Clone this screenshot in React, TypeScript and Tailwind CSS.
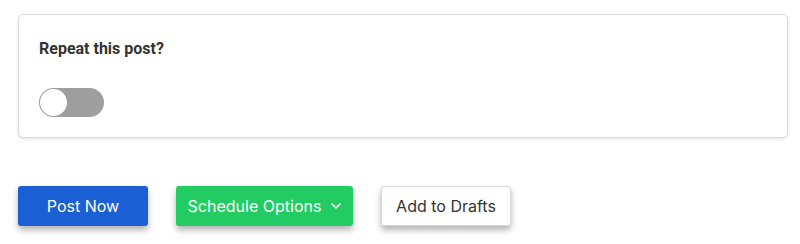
import React from "react";

export default function App() {
  return (
    <div className="w-[800px] h-[244px] bg-white px-[18px] pt-[14px]" style={{ fontFamily: "Inter, 'Noto Sans', sans-serif" }}>
      <div className="w-[770px] h-[124px] rounded-[5px] border border-[#dcdcdc] bg-white shadow-[0_1px_3px_rgba(0,0,0,0.12)] px-[20px] pt-[24px]">
        <div className="text-[16px] font-bold text-[#333] leading-[20px]" style={{ fontFamily: "Roboto, 'Noto Sans', sans-serif" }}>
          Repeat this post?
        </div>
        <div className="mt-[29px] relative w-[65px] h-[29px] rounded-full bg-[#9e9e9e]">
          <div className="absolute left-[1px] top-[1px] w-[27px] h-[27px] rounded-full bg-white" />
        </div>
      </div>
      <div className="mt-[48px] flex items-center gap-[28px]">
        <button className="w-[130px] h-[40px] rounded-[3px] bg-[#1b5fd4] text-white text-[16px] shadow-[0_4px_6px_rgba(0,0,0,0.3)]">
          Post Now
        </button>
        <button className="w-[177px] h-[40px] rounded-[3px] bg-[#22cc62] text-white text-[16px] shadow-[0_4px_6px_rgba(0,0,0,0.3)] flex items-center justify-center gap-[10px]">
          <span>Schedule Options</span>
          <svg width="10" height="6" viewBox="0 0 10 6" fill="none" stroke="white" strokeWidth="1.5" strokeLinecap="round" strokeLinejoin="round">
            <path d="M1 1l4 4 4-4" />
          </svg>
        </button>
        <button className="w-[130px] h-[40px] rounded-[3px] bg-white border border-[#d8d8d8] text-[#333] text-[16px] shadow-[0_4px_6px_rgba(0,0,0,0.3)]">
          Add to Drafts
        </button>
      </div>
    </div>
  );
}
